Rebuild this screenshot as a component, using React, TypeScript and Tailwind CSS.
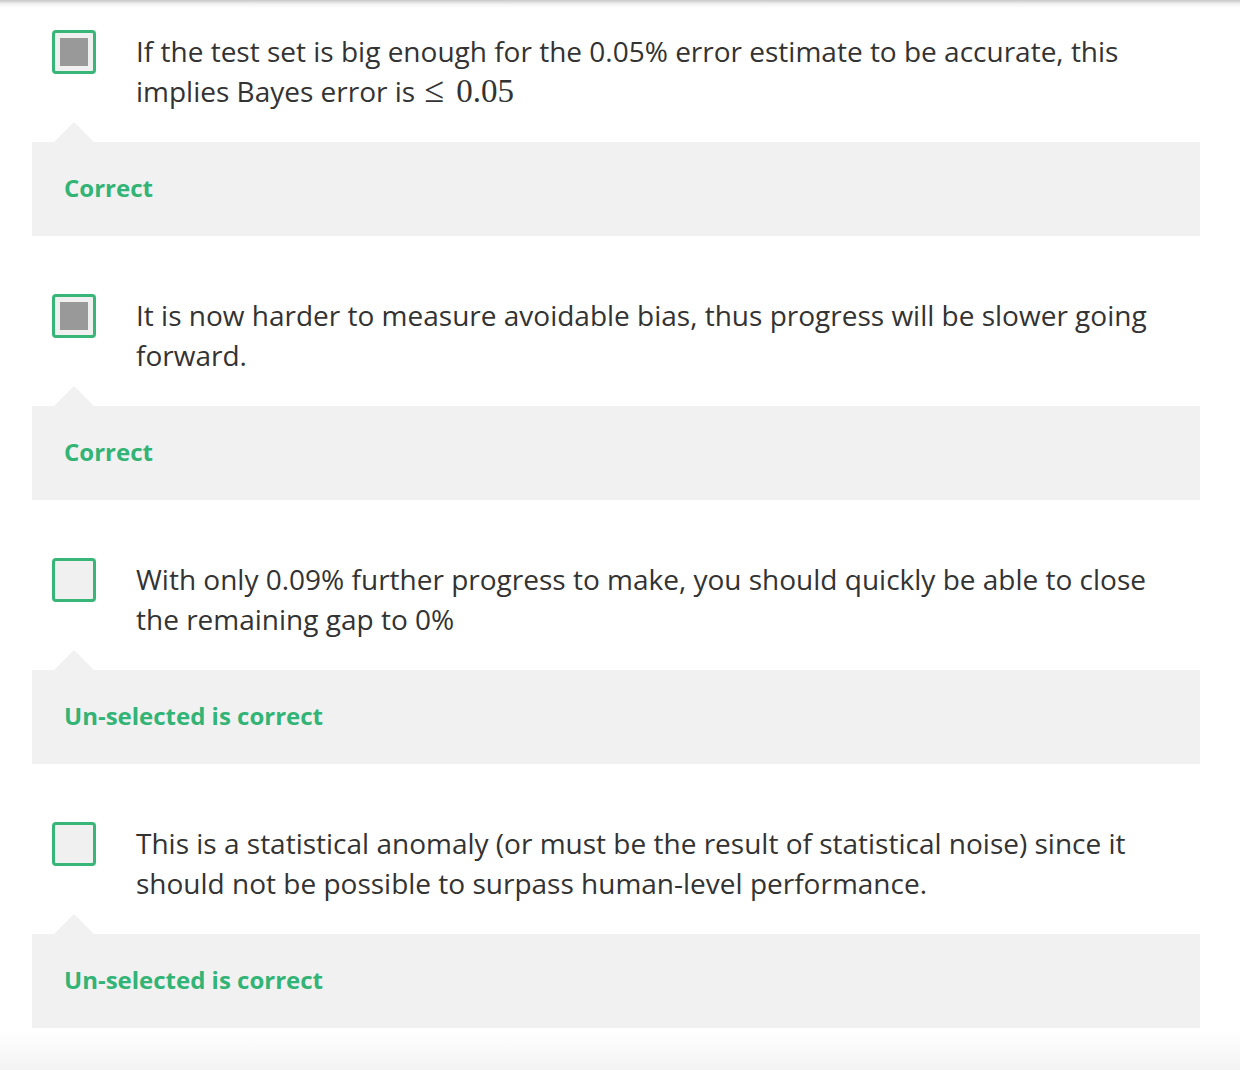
import React from 'react';

type Option = {
  text: React.ReactNode;
  checked: boolean;
  feedback: string;
};

const options: Option[] = [
  {
    text: (
      <>
        If the test set is big enough for the 0.05% error estimate to be accurate, this implies Bayes error is{' '}
        <span className="inline-block font-['Liberation_Serif',serif] text-[36px] leading-none ml-[2px] mr-[12px]">≤</span>
        <span className="inline-block font-['Liberation_Serif',serif] text-[33px] leading-none">0.05</span>
      </>
    ),
    checked: true,
    feedback: 'Correct',
  },
  {
    text: 'It is now harder to measure avoidable bias, thus progress will be slower going forward.',
    checked: true,
    feedback: 'Correct',
  },
  {
    text: 'With only 0.09% further progress to make, you should quickly be able to close the remaining gap to 0%',
    checked: false,
    feedback: 'Un-selected is correct',
  },
  {
    text: 'This is a statistical anomaly (or must be the result of statistical noise) since it should not be possible to surpass human-level performance.',
    checked: false,
    feedback: 'Un-selected is correct',
  },
];

function Checkbox({ checked }: { checked: boolean }) {
  return (
    <div className="w-[44px] h-[44px] shrink-0 rounded-[4px] border-[3px] border-[#38b677] bg-[#f0f0f0] flex items-center justify-center">
      {checked && <div className="w-[28px] h-[28px] bg-[#999999]" />}
    </div>
  );
}

function OptionItem({ option }: { option: Option }) {
  return (
    <div>
      <div className="flex pl-[20px] pr-[20px]">
        <Checkbox checked={option.checked} />
        <div className="ml-[40px] mt-[1px] h-[80px] text-[28px] leading-[40px] text-[#333333]">{option.text}</div>
      </div>
      <div className="relative mt-[31px] h-[94px] bg-[#f1f1f1] flex items-center px-[32px]">
        <div className="absolute left-[22px] -top-[20px] w-0 h-0 border-l-[20px] border-r-[20px] border-b-[20px] border-l-transparent border-r-transparent border-b-[#f1f1f1]" />
        <span className="text-[24px] leading-[32px] -mt-[2px] font-bold text-[#31b475]">{option.feedback}</span>
      </div>
    </div>
  );
}

export default function App() {
  return (
    <div className="relative w-[1240px] h-[1070px] bg-white font-['Open_Sans',sans-serif] overflow-hidden">
      <div className="absolute top-0 left-0 right-0 h-[8px] bg-gradient-to-b from-[#c8c8c8] via-[#f2f2f2] to-white" />
      <div className="flex flex-col gap-[58px] pt-[30px] pl-[32px] pr-[40px]">
        {options.map((o, i) => (
          <OptionItem key={i} option={o} />
        ))}
      </div>
      <div className="absolute bottom-0 left-0 right-0 h-[40px] bg-gradient-to-b from-white/0 to-[#f3f3f3]" />
    </div>
  );
}
